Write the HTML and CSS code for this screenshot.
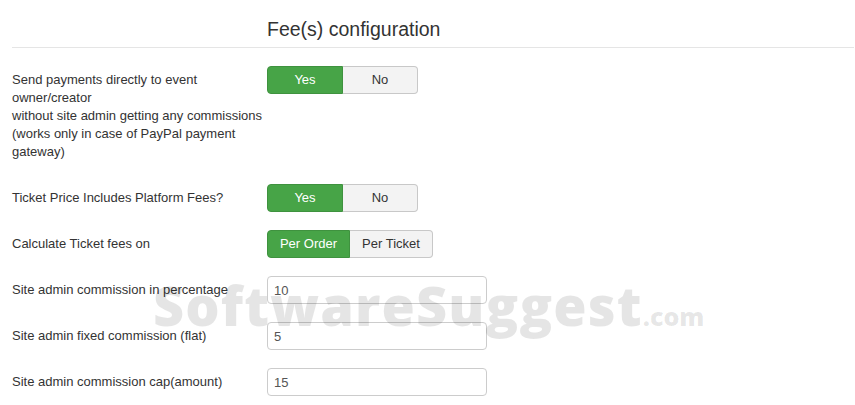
FILE: index.html
```html
<!DOCTYPE html>
<html>
<head>
<meta charset="utf-8">
<link rel="stylesheet" href="styles.css">
</head>
<body>
<div class="page">
  <div class="legend-row">
    <h2 class="legend">Fee(s) configuration</h2>
  </div>
  <hr class="rule">
  <form class="form">
    <div class="group group-tall">
      <label class="label">Send payments directly to event owner/creator<br>without site admin getting any commissions (works only in case of PayPal payment gateway)</label>
      <div class="controls">
        <div class="btn-group">
          <span class="btn btn-yes active">Yes</span><span class="btn btn-no">No</span>
        </div>
      </div>
    </div>
    <div class="group">
      <label class="label">Ticket Price Includes Platform Fees?</label>
      <div class="controls">
        <div class="btn-group">
          <span class="btn btn-yes active">Yes</span><span class="btn btn-no">No</span>
        </div>
      </div>
    </div>
    <div class="group">
      <label class="label">Calculate Ticket fees on</label>
      <div class="controls">
        <div class="btn-group">
          <span class="btn btn-wide active">Per Order</span><span class="btn btn-wide">Per Ticket</span>
        </div>
      </div>
    </div>
    <div class="group">
      <label class="label">Site admin commission in percentage</label>
      <div class="controls"><input class="input" type="text" value="10"></div>
    </div>
    <div class="group">
      <label class="label">Site admin fixed commission (flat)</label>
      <div class="controls"><input class="input" type="text" value="5"></div>
    </div>
    <div class="group">
      <label class="label">Site admin commission cap(amount)</label>
      <div class="controls"><input class="input" type="text" value="15"></div>
    </div>
  </form>
  <div class="watermark">SoftwareSuggest<span class="wm-dot">.com</span></div>
</div>
</body>
</html>
```

FILE: styles.css
```css
html, body {
  margin: 0;
  padding: 0;
  background: #fff;
}
body {
  font-family: "Liberation Sans", Arial, sans-serif;
  font-size: 13px;
  line-height: 18px;
  color: #333;
}
.page {
  position: relative;
  padding: 0 1px 0 12px;
  height: 405px;
  overflow: hidden;
}
.legend-row {
  padding-left: 255px;
  padding-top: 17px;
}
.legend {
  margin: 0;
  font-size: 19.5px;
  font-weight: normal;
  line-height: 24px;
  color: #333;
}
.rule {
  margin: 6px 0 0 0;
  border: 0;
  border-top: 1px solid #e5e5e5;
  height: 0;
}
.form {
  margin: 0;
  padding-top: 18px;
}
.group {
  display: grid;
  grid-template-columns: 255px 1fr;
  margin-bottom: 18px;
}
.group-tall {
  margin-bottom: 23px;
}
.label {
  padding-top: 5px;
  padding-right: 5px;
  color: #333;
}
.controls {
  display: flex;
  align-items: flex-start;
}
.btn-group {
  display: flex;
}
.btn {
  box-sizing: border-box;
  height: 28px;
  line-height: 26px;
  text-align: center;
  font-size: 13px;
  color: #333;
  background: #f3f3f3;
  border: 1px solid #c8c8c8;
}
.btn:first-child {
  border-radius: 4px 0 0 4px;
}
.btn:last-child {
  border-radius: 0 4px 4px 0;
  border-left: 0;
}
.btn.active {
  background: #47a447;
  border-color: #3f923f;
  color: #fff;
}
.btn-yes { width: 76px; }
.btn-no { width: 75px; }
.btn-wide { width: 83px; }
.input {
  box-sizing: border-box;
  width: 220px;
  height: 28px;
  margin: 0;
  padding: 0 6px;
  font-family: "Liberation Sans", Arial, sans-serif;
  font-size: 13px;
  color: #555;
  background: #fff;
  border: 1px solid #ccc;
  border-radius: 4px;
  outline: none;
}
.watermark {
  position: absolute;
  left: 153px;
  top: 270px;
  font-family: "Open Sans", "DejaVu Sans", sans-serif;
  font-weight: 800;
  font-size: 54px;
  line-height: 70px;
  letter-spacing: 1.1px;
  color: rgba(0, 0, 0, 0.1);
  pointer-events: none;
  white-space: nowrap;
}
.wm-dot {
  font-size: 25px;
  letter-spacing: 0;
}
```
